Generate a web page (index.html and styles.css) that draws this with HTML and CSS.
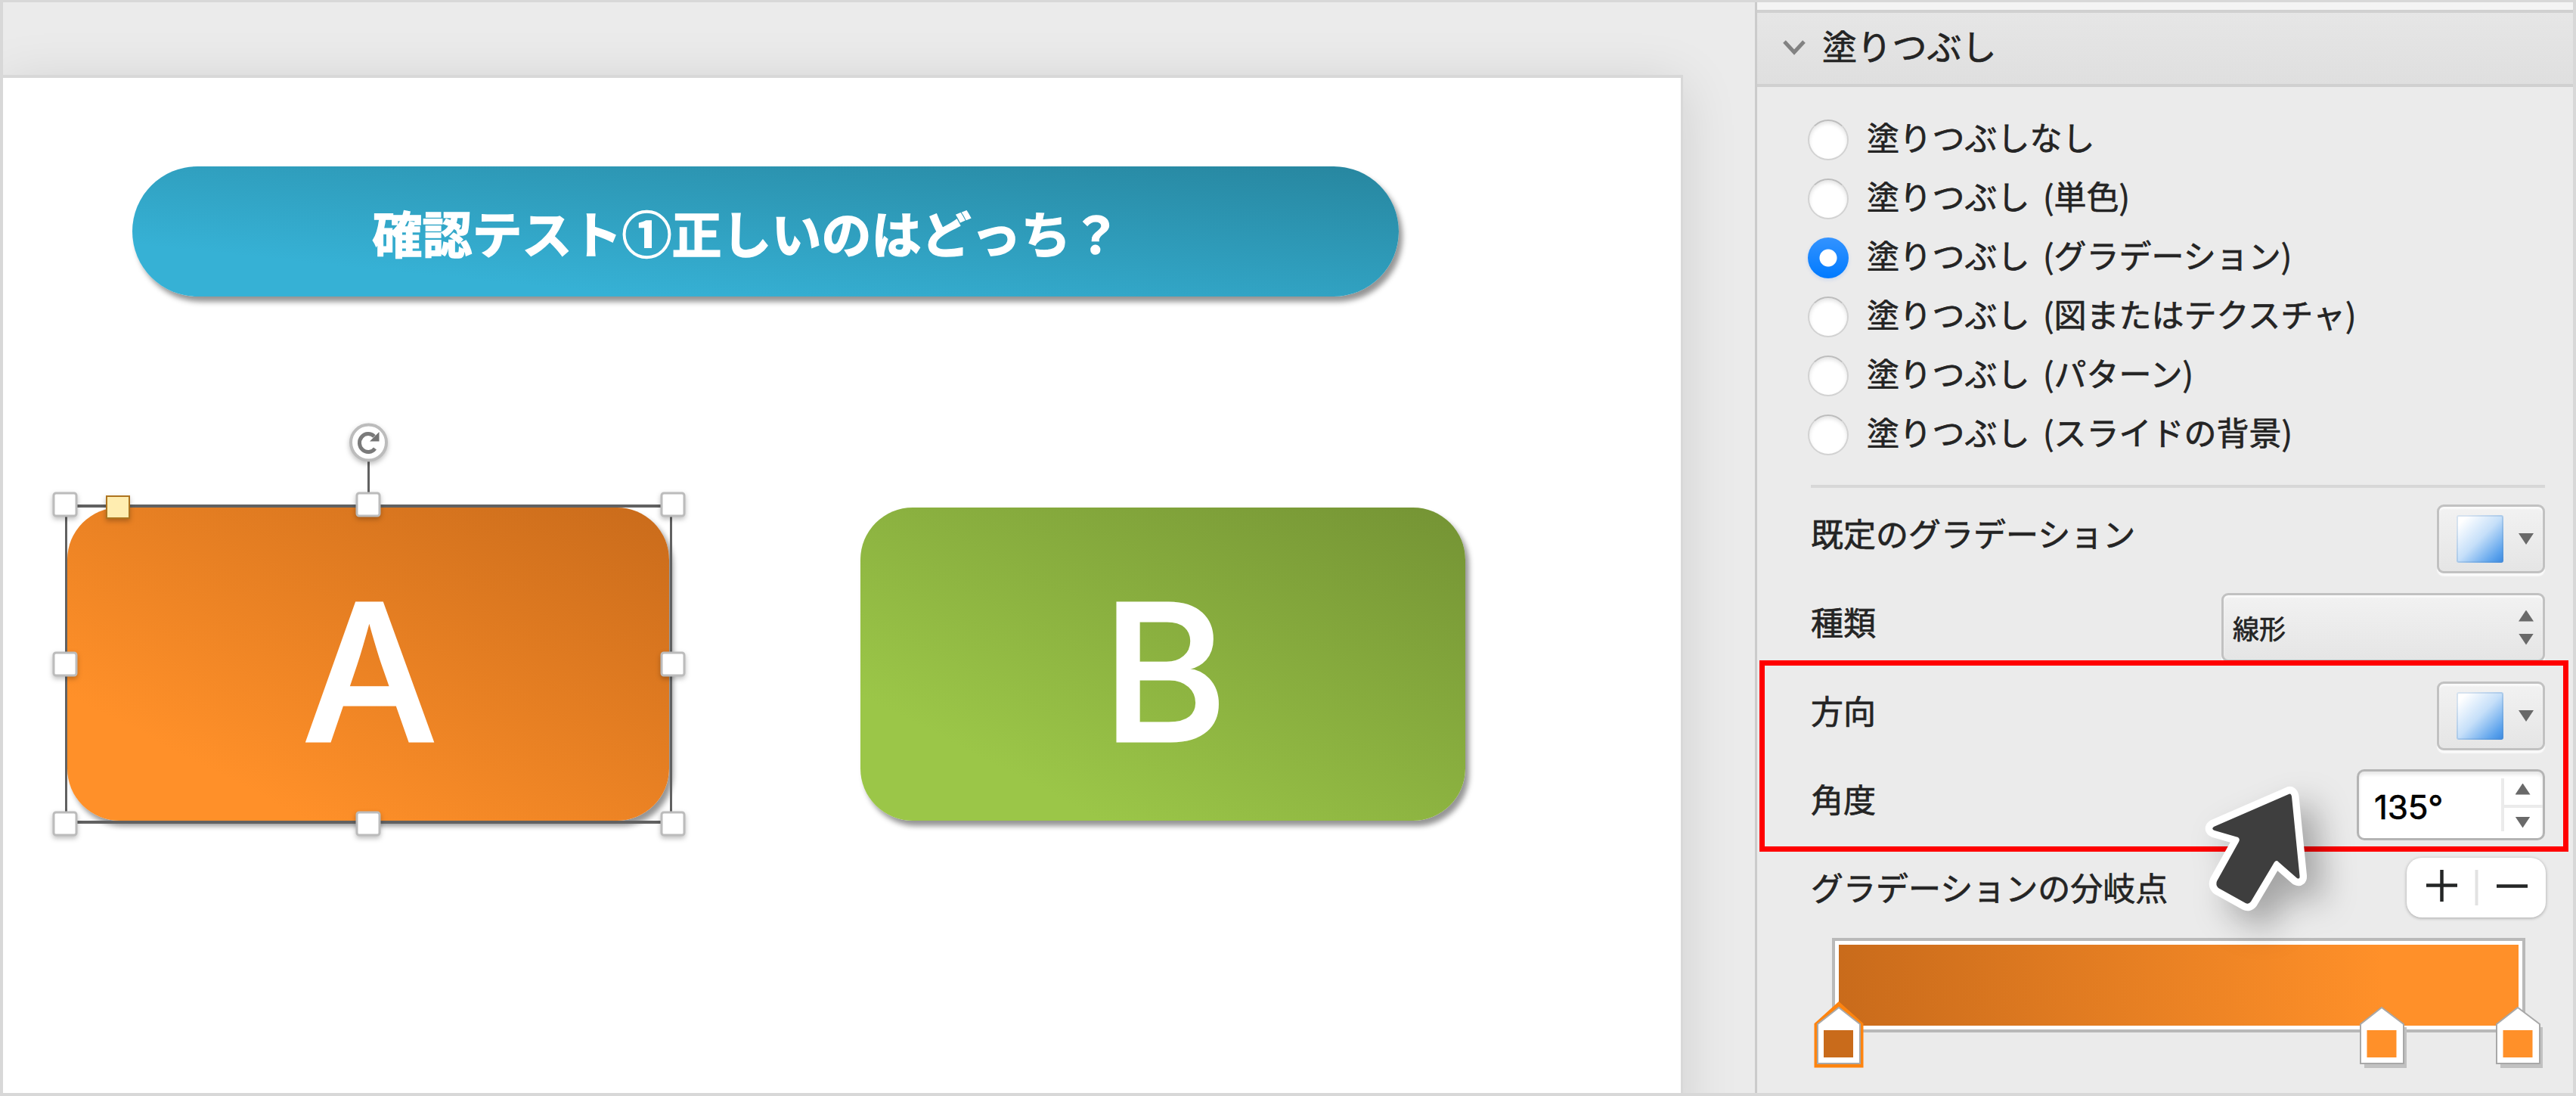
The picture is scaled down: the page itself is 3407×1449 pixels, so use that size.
FILE: index.html
```html
<!DOCTYPE html>
<html lang="ja">
<head>
    <meta charset="UTF-8">
    <meta name="viewport" content="width=device-width, initial-scale=1.0">
    <title>塗りつぶし</title>
    <link rel="stylesheet" href="styles.css">
</head>
<body>
    <div class="window">
        <main class="workspace">
            <div class="slide">
                <div class="shape banner"><span>確認テスト①正しいのはどっち？</span></div>
                <div class="shape card card-a"><span>A</span></div>
                <div class="shape card card-b"><span>B</span></div>

                <!-- selection frame of shape A -->
                <svg class="selection" width="880" height="580" viewBox="50 540 880 580">
                    <g fill="none" stroke="#616161">
                        <path d="M87.5 667v422M887.5 667v422M487.5 600v60" stroke-width="3"/>
                        <path d="M86 669h803M86 1087h803" stroke-width="4"/>
                    </g>
                    <g class="handles">
                        <rect x="71" y="652" width="30" height="30" rx="3"/>
                        <rect x="472" y="652" width="30" height="30" rx="3"/>
                        <rect x="875" y="652" width="30" height="30" rx="3"/>
                        <rect x="71" y="863" width="30" height="30" rx="3"/>
                        <rect x="875" y="863" width="30" height="30" rx="3"/>
                        <rect x="71" y="1074" width="30" height="30" rx="3"/>
                        <rect x="472" y="1074" width="30" height="30" rx="3"/>
                        <rect x="875" y="1074" width="30" height="30" rx="3"/>
                        <rect class="adjust" x="141" y="656" width="30" height="29"/>
                        <circle cx="487.500" cy="585" r="23.500"/>
                    </g>
                    <path d="M496 593A11.500 12 0 1 1 495 577" fill="none" stroke="#7a7a7a" stroke-width="5"/>
                    <path d="M501.500 571v12.500h-12.500z" fill="#747474"/>
                </svg>
            </div>
        </main>

        <aside class="panel">
            <header class="panel-header">
                <svg width="32" height="22" viewBox="0 0 32 22"><path d="M3 3l13 14L29 3" fill="none" stroke="#828282" stroke-width="5"/></svg>
                <span>塗りつぶし</span>
            </header>
            <div class="panel-body">
                <div class="radios">
                    <div class="radio"><i></i><span>塗りつぶしなし</span></div>
                    <div class="radio"><i></i><span>塗りつぶし (単色)</span></div>
                    <div class="radio checked"><i></i><span>塗りつぶし (グラデーション)</span></div>
                    <div class="radio"><i></i><span>塗りつぶし (図またはテクスチャ)</span></div>
                    <div class="radio"><i></i><span>塗りつぶし (パターン)</span></div>
                    <div class="radio"><i></i><span>塗りつぶし (スライドの背景)</span></div>
                </div>

                <div class="rows">
                    <div class="row">
                        <label>既定のグラデーション</label>
                        <div class="button swatch-button"><b class="swatch"></b><i class="down"></i></div>
                    </div>
                    <div class="row">
                        <label>種類</label>
                        <div class="button select"><span>線形</span><div class="arrows"><i class="up"></i><i class="down"></i></div></div>
                    </div>
                    <div class="row">
                        <label>方向</label>
                        <div class="button swatch-button"><b class="swatch"></b><i class="down"></i></div>
                    </div>
                    <div class="row">
                        <label>角度</label>
                        <div class="stepper">
                            <span>135°</span>
                            <div class="step-buttons"><div><i class="up"></i></div><div><i class="down"></i></div></div>
                        </div>
                    </div>
                    <div class="row">
                        <label>グラデーションの分岐点</label>
                        <div class="plus-minus">
                            <svg width="184" height="79" viewBox="0 0 184 79">
                                <path d="M46.500 16v42M26 36.500h41M119 37.500h41" stroke="#242626" stroke-width="4.500"/>
                                <path d="M92.500 16v47" stroke="#e2e2e2" stroke-width="4"/>
                            </svg>
                        </div>
                    </div>
                </div>

                <div class="gradient">
                    <div class="gradient-fill"></div>
                    <svg class="stops" width="1000" height="100" viewBox="2390 1320 1000 100">
                        <path d="M2432 1325l31 28v56h-62v-56z" fill="#ff840f" stroke="#ff840f" stroke-width="3"/>
                        <path d="M2432 1331l28 22v52h-56v-52z" fill="#fff" stroke="#a8a8a8" stroke-width="2"/>
                        <path d="M2412 1361h39v36h-39z" fill="#c96b1b"/>
                        <g id="stop">
                            <path d="M3127 1357h56v54h-56z" fill="#c1c1c1"/>
                            <path d="M3150 1331l29 22v52h-57v-52z" fill="#fff" stroke="#a8a8a8" stroke-width="2"/>
                            <path d="M3130.500 1361h39v36h-39z" fill="#ff9029"/>
                        </g>
                        <use href="#stop" x="180"/>
                    </svg>
                </div>
            </div>

            <div class="highlight"></div>
            <svg class="pointer" width="300" height="300" viewBox="2860 1000 300 300">
                <path d="M3027 1050L2928 1093Q2924 1096 2929 1098L2960 1107Q2963 1109 2961 1113L2932 1165Q2930 1170 2934 1174L2970 1194Q2974 1196 2977 1192L3008 1140Q3011 1136 3014 1140L3038 1161Q3042 1163 3041.500 1158L3031 1053Q3030 1048 3027 1050z"/>
            </svg>
        </aside>
    </div>
</body>
</html>
```

FILE: styles.css
```css
* {
    box-sizing: border-box;
}

body {
    margin: 0;
    font-family: "Noto Sans CJK JP", sans-serif;
    color: #242424;
}

.window {
    display: flex;
    width: 3407px;
    height: 1449px;
    border: solid #d8d8d8;
    border-width: 3px 4px 4px;
    background: #ebebeb;
    overflow: hidden;
}

.workspace {
    width: 2317px;
    padding-top: 96px;
    overflow: hidden;
}

.slide {
    position: relative;
    width: 2222px;
    height: 1400px;
    border: solid #d8d8d8;
    border-width: 4px 3px 0 0;
    background: #fff;
    box-shadow: 0 12px 70px rgba(0, 0, 0, 0.12);
}

/* shapes on the slide */
.shape {
    position: absolute;
    display: flex;
    align-items: center;
    justify-content: center;
    color: #fff;
    box-shadow: 5px 7px 7px rgba(0, 0, 0, 0.42);
}

.banner {
    left: 171px;
    top: 117px;
    width: 1675px;
    height: 172px;
    padding: 0 50px 0 0;
    border-radius: 86px;
    font-size: 66px;
    font-weight: 700;
    -webkit-text-stroke: 1.5px #fff;
    background: linear-gradient(to bottom left, #27869f, #36b1d5 80%);
}

.card {
    top: 568px;
    width: 796px;
    height: 414px;
    padding-top: 21px;
    border-radius: 69px;
    font-family: Inter, sans-serif;
    font-size: 252px;
    font-weight: 500;
    line-height: 414px;
    -webkit-text-stroke: 3px #fff;
}

.card-a {
    left: 85px;
    padding-left: 4px;
    background: linear-gradient(to bottom left, #c96b1b, #ff9029 80%);
}

.card-b {
    left: 1134px;
    width: 800px;
    padding-left: 5px;
    background: linear-gradient(to bottom left, #749334, #9bc648 80%);
}

.selection {
    position: absolute;
    left: 46px;
    top: 437px;
}

.handles {
    fill: #fff;
    stroke: #bcbcbc;
    stroke-width: 3;
    filter: drop-shadow(0 3px 3px rgba(0, 0, 0, 0.25));
}

.handles circle {
    stroke-width: 4;
}

.handles .adjust {
    fill: #ffedb0;
    stroke: #ae741f;
    stroke-width: 2;
}

/* format panel */
.panel {
    position: relative;
    width: 1082px;
    height: 1442px;
    border-left: 3px solid #cbcbcb;
    background: #ebebeb;
    -webkit-text-stroke: 0.7px;
}

.panel-header {
    display: flex;
    align-items: center;
    height: 112px;
    padding: 0 0 2px 33px;
    border-top: 14px solid #d0d0d0;
    border-bottom: 4px solid #cfd0d1;
    border-image: linear-gradient(#f4f4f4 10px, #d0d0d0 10px) 14 0 4 0;
    background: linear-gradient(#e6e6e6, #dfdfdf);
    font-size: 46px;
}

.panel-header span {
    margin-left: 21px;
    line-height: 46px;
    padding-bottom: 8px;
}

.panel-body {
    padding: 31px 37px 0 71px;
    font-size: 43px;
}

.radios {
    padding-bottom: 27px;
    border-bottom: 4px solid #d7d7d7;
}

.radio {
    display: flex;
    align-items: center;
    height: 78px;
    margin-left: -4px;
}

.radio i {
    width: 54px;
    height: 54px;
    margin-right: 24px;
    border: 2px solid #d2d2d2;
    border-top-color: #bdbdbd;
    border-radius: 50%;
    background: #fff;
    box-shadow: inset 0 3px 5px #e4e4e4;
}

.radio span {
    padding-bottom: 11px;
    line-height: 50px;
    word-spacing: 8px;
}

.checked i {
    border: 0;
    background: radial-gradient(circle, #fff 11px, transparent 12px), linear-gradient(#3393ff, #007aff);
    box-shadow: 0 2px 5px rgba(0, 100, 255, 0.15);
}

.rows {
    padding-top: 9px;
}

.row {
    display: flex;
    align-items: center;
    justify-content: space-between;
    height: 117px;
}

.row label {
    padding-bottom: 18px;
    line-height: 50px;
}

.button {
    display: flex;
    align-items: center;
    justify-content: space-between;
    height: 91px;
    border: 3px solid #c1c1c1;
    border-radius: 9px;
    background: linear-gradient(#f2f2f2, #e5e5e5);
    box-shadow: 0 4px 1px #f9f9f9, inset 0 3px 2px #fafafa;
}

.swatch-button {
    width: 143px;
    padding: 0 12px 0 23px;
}

.swatch {
    width: 62px;
    height: 63px;
    border: 2px solid rgba(90, 140, 190, 0.25);
    border-radius: 3px;
    background: linear-gradient(135deg, #fff 12%, #c5dff9 50%, #5ba2ec 85%, #3a88e0) border-box;
}

.select {
    width: 428px;
    padding: 0 12px 0 12px;
    font-size: 35px;
}

.arrows {
    display: flex;
    flex-direction: column;
    gap: 16px;
}

.up,
.down {
    width: 20px;
    height: 15px;
    background: #696969;
    clip-path: polygon(50% 0, 100% 100%, 0 100%);
}

.down {
    clip-path: polygon(0 0, 100% 0, 50% 100%);
}

.stepper {
    display: flex;
    align-items: center;
    width: 249px;
    height: 94px;
    padding-left: 20px;
    border: 3px solid #b4b4b4;
    border-radius: 10px;
    background: #fff;
    box-shadow: inset 0 4px 4px #e8e8e8;
    color: #000;
    font: 44px Inter, sans-serif;
}

.stepper span {
    flex: 1;
    padding-top: 6px;
    letter-spacing: -0.2px;
}

.step-buttons {
    width: 55px;
    height: 70px;
    border-left: 4px solid #ebebeb;
}

.step-buttons div {
    display: flex;
    align-items: center;
    justify-content: center;
    height: 35px;
    padding: 0 2px 6px 0;
}

.step-buttons div + div {
    padding: 8px 2px 0 0;
    border-top: 4px solid #ebebeb;
}

.plus-minus {
    height: 79px;
    margin: 0 -1px 14px 0;
    border-radius: 20px;
    background: #fff;
    box-shadow: 0 1px 4px rgba(0, 0, 0, 0.3);
}

.plus-minus svg {
    display: block;
}

.gradient {
    position: relative;
    width: 917px;
    height: 125px;
    margin: 1px 0 0 28px;
    padding: 5px;
    border: 4px solid #b9b9b9;
    background: #fff;
}

.gradient-fill {
    height: 107px;
    background: linear-gradient(90deg, #c96b1b, #ff9029 80%);
}

.stops {
    position: absolute;
    left: -37px;
    top: 77px;
}

.highlight {
    position: absolute;
    left: 3px;
    top: 870px;
    width: 1070px;
    height: 253px;
    border: 7px solid #ff0000;
}

/* big arrow cursor lying over the panel */
.pointer {
    position: absolute;
    left: 536px;
    top: 997px;
    overflow: visible;
    fill: #3e3e3e;
    stroke: #fff;
    stroke-width: 19;
    stroke-linejoin: round;
    paint-order: stroke;
    filter: drop-shadow(22px 22px 22px rgba(0, 0, 0, 0.3));
}
```
